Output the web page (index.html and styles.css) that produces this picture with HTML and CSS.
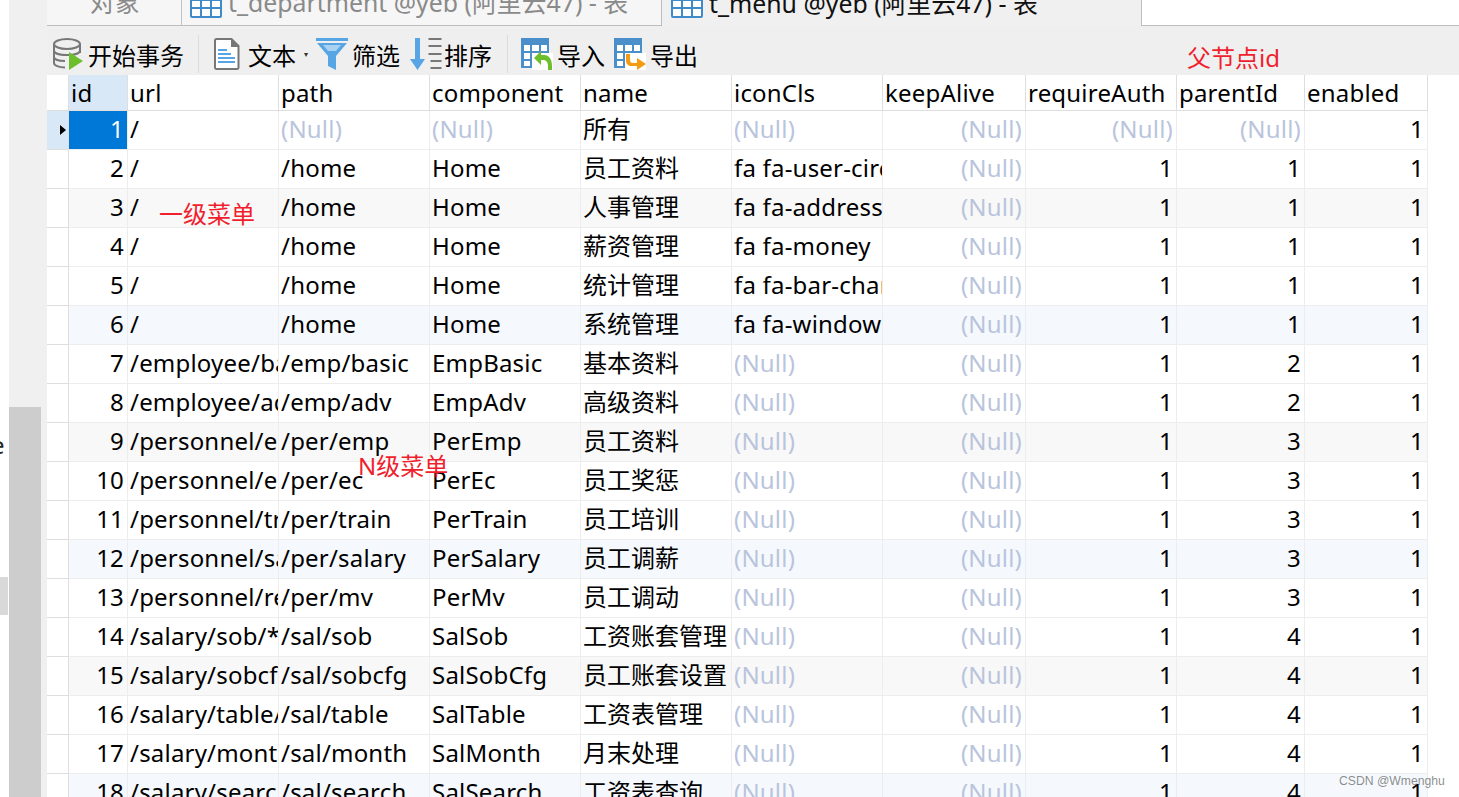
FILE: index.html
```html
<!DOCTYPE html>
<html lang="zh">
<head>
<meta charset="utf-8">
<title>t_menu</title>
<link rel="stylesheet" href="styles.css">
</head>
<body>
<div class="app">
  <aside class="edge"><span class="edge-letter">e</span><span class="edge-box"></span></aside>
  <div class="rail"><div class="thumb"></div></div>
  <main class="main">
    <nav class="tabs">
      <div class="tab tab-obj"><span>对象</span></div>
      <div class="tab tab-dept">
        <svg class="tab-icon" viewBox="0 0 32 24"><rect width="32" height="24" rx="2" fill="#3f8ac8"/><g fill="#fff"><rect x="2" y="7" width="8" height="6"/><rect x="12" y="7" width="8" height="6"/><rect x="22" y="7" width="8" height="6"/><rect x="2" y="15" width="8" height="7"/><rect x="12" y="15" width="8" height="7"/><rect x="22" y="15" width="8" height="7"/></g></svg>
        <span>t_department @yeb (阿里云47) - 表</span>
      </div>
      <div class="tab tab-menu">
        <svg class="tab-icon" viewBox="0 0 32 24"><rect width="32" height="24" rx="2" fill="#3f8ac8"/><g fill="#fff"><rect x="2" y="7" width="8" height="6"/><rect x="12" y="7" width="8" height="6"/><rect x="22" y="7" width="8" height="6"/><rect x="2" y="15" width="8" height="7"/><rect x="12" y="15" width="8" height="7"/><rect x="22" y="15" width="8" height="7"/></g></svg>
        <span>t_menu @yeb (阿里云47) - 表</span>
      </div>
      <div class="tab-rest"></div>
    </nav>
    <div class="toolbar">
      <div class="tool tool-begin">
        <svg class="ico-db" viewBox="0 0 30 32"><g fill="none" stroke="#777" stroke-width="2"><ellipse cx="14" cy="6" rx="13" ry="5"/><path d="M1 6v19c0 2.500 5 4.500 11 4.500M27 6v9M1 12.500c0 2.500 5 4.500 13 4.500s13-2 13-4.500M1 19c0 2.500 5 4 11 4"/></g><path d="M16 14l14 9-14 9z" fill="#6cbe2c"/></svg>
        <span>开始事务</span>
      </div>
      <i class="sep sep-a"></i>
      <div class="tool tool-text">
        <svg class="ico-doc" viewBox="0 0 26 32"><path d="M2.500 1h15l7 7v21.500a1.500 1.500 0 0 1-1.500 1.500h-20.500a1.500 1.500 0 0 1-1.500-1.500v-27a1.500 1.500 0 0 1 1.500-1.500z" fill="#fff" stroke="#777" stroke-width="2"/><path d="M17 1v8h8z" fill="#777"/><g fill="#57a5e4"><rect x="4" y="11" width="9" height="2"/><rect x="4" y="15" width="13" height="2"/><rect x="4" y="19" width="17" height="2"/><rect x="4" y="23" width="17" height="2"/></g></svg>
        <span>文本</span><b class="dot">▾</b>
      </div>
      <div class="tool tool-filter">
        <svg class="ico-funnel" viewBox="0 0 32 32"><path d="M0 0h32v3h-32z" fill="#57a5e4"/><path d="M1 5h30l-11 13v14l-8-4v-10z" fill="#57a5e4"/><path d="M7 7h18l-5 6h-8z" fill="#a9d2f2"/></svg>
        <span>筛选</span>
      </div>
      <div class="tool tool-sort">
        <svg class="ico-sort" viewBox="0 0 32 32"><path d="M5.500 0h5v21h5l-7.500 11-7.500-11h5z" fill="#57a5e4"/><g fill="#777"><rect x="19" y="0" width="13" height="2"/><rect x="19" y="7" width="13" height="2"/><rect x="19" y="15" width="13" height="2"/><rect x="21" y="22" width="11" height="2"/><rect x="21" y="29" width="11" height="2"/></g></svg>
        <span>排序</span>
      </div>
      <i class="sep sep-b"></i>
      <div class="tool tool-import">
        <svg class="ico-table" viewBox="0 0 32 32"><rect y="0" width="28" height="30" fill="#4a8fc9"/><g fill="#fff"><rect x="3" y="7" width="6" height="6"/><rect x="11" y="7" width="7" height="6"/><rect x="20" y="7" width="6" height="6"/><rect x="3" y="15" width="6" height="6"/><rect x="3" y="23" width="6" height="5"/><path d="M11 15h21v17h-21z"/></g><path d="M13 20l7-7v4h3c5 0 8 4 8 11v4h-4v-4c0-4-2-6-5-6h-2v5z" fill="#6cbe2c"/></svg>
        <span>导入</span>
      </div>
      <div class="tool tool-export">
        <svg class="ico-table" viewBox="0 0 32 32"><rect y="0" width="28" height="30" fill="#4a8fc9"/><g fill="#fff"><rect x="3" y="7" width="6" height="6"/><rect x="11" y="7" width="7" height="6"/><rect x="20" y="7" width="6" height="6"/><rect x="3" y="15" width="6" height="6"/><rect x="3" y="23" width="6" height="5"/><path d="M11 15h21v17h-21z"/></g><path d="M12 16h4v6c0 2 1 3 3 3h4v-5l9 6-9 6v-4h-5c-4 0-6-2-6-6z" fill="#f59a13"/></svg>
        <span>导出</span>
      </div>
    </div>
    <div class="grid-wrap">
      <table class="grid">
        <colgroup><col class="c0"><col class="c1"><col class="c2"><col class="c3"><col class="c4"><col class="c5"><col class="c6"><col class="c7"><col class="c8"><col class="c9"><col class="c10"></colgroup>
        <thead>
          <tr><th class="rh"></th><th class="sel-h">id</th><th>url</th><th>path</th><th>component</th><th>name</th><th>iconCls</th><th>keepAlive</th><th>requireAuth</th><th>parentId</th><th>enabled</th></tr>
        </thead>
        <tbody>
          <tr><td class="rh rh-cur"><i class="arrow"></i></td><td class="n sel">1</td><td>/</td><td class="nl">(Null)</td><td class="nl">(Null)</td><td>所有</td><td class="nl">(Null)</td><td class="n nl">(Null)</td><td class="n nl">(Null)</td><td class="n nl">(Null)</td><td class="n">1</td></tr>
          <tr><td class="rh"></td><td class="n">2</td><td>/</td><td>/home</td><td>Home</td><td>员工资料</td><td>fa fa-user-circle</td><td class="n nl">(Null)</td><td class="n">1</td><td class="n">1</td><td class="n">1</td></tr>
          <tr class="g"><td class="rh"></td><td class="n">3</td><td>/</td><td>/home</td><td>Home</td><td>人事管理</td><td>fa fa-address-card</td><td class="n nl">(Null)</td><td class="n">1</td><td class="n">1</td><td class="n">1</td></tr>
          <tr><td class="rh"></td><td class="n">4</td><td>/</td><td>/home</td><td>Home</td><td>薪资管理</td><td>fa fa-money</td><td class="n nl">(Null)</td><td class="n">1</td><td class="n">1</td><td class="n">1</td></tr>
          <tr><td class="rh"></td><td class="n">5</td><td>/</td><td>/home</td><td>Home</td><td>统计管理</td><td>fa fa-bar-chart</td><td class="n nl">(Null)</td><td class="n">1</td><td class="n">1</td><td class="n">1</td></tr>
          <tr class="b"><td class="rh"></td><td class="n">6</td><td>/</td><td>/home</td><td>Home</td><td>系统管理</td><td>fa fa-windows</td><td class="n nl">(Null)</td><td class="n">1</td><td class="n">1</td><td class="n">1</td></tr>
          <tr><td class="rh"></td><td class="n">7</td><td>/employee/basic/**</td><td>/emp/basic</td><td>EmpBasic</td><td>基本资料</td><td class="nl">(Null)</td><td class="n nl">(Null)</td><td class="n">1</td><td class="n">2</td><td class="n">1</td></tr>
          <tr><td class="rh"></td><td class="n">8</td><td>/employee/advanced/**</td><td>/emp/adv</td><td>EmpAdv</td><td>高级资料</td><td class="nl">(Null)</td><td class="n nl">(Null)</td><td class="n">1</td><td class="n">2</td><td class="n">1</td></tr>
          <tr class="g"><td class="rh"></td><td class="n">9</td><td>/personnel/emp/**</td><td>/per/emp</td><td>PerEmp</td><td>员工资料</td><td class="nl">(Null)</td><td class="n nl">(Null)</td><td class="n">1</td><td class="n">3</td><td class="n">1</td></tr>
          <tr><td class="rh"></td><td class="n">10</td><td>/personnel/ec/**</td><td>/per/ec</td><td>PerEc</td><td>员工奖惩</td><td class="nl">(Null)</td><td class="n nl">(Null)</td><td class="n">1</td><td class="n">3</td><td class="n">1</td></tr>
          <tr><td class="rh"></td><td class="n">11</td><td>/personnel/train/**</td><td>/per/train</td><td>PerTrain</td><td>员工培训</td><td class="nl">(Null)</td><td class="n nl">(Null)</td><td class="n">1</td><td class="n">3</td><td class="n">1</td></tr>
          <tr class="b"><td class="rh"></td><td class="n">12</td><td>/personnel/salary/**</td><td>/per/salary</td><td>PerSalary</td><td>员工调薪</td><td class="nl">(Null)</td><td class="n nl">(Null)</td><td class="n">1</td><td class="n">3</td><td class="n">1</td></tr>
          <tr><td class="rh"></td><td class="n">13</td><td>/personnel/remove/**</td><td>/per/mv</td><td>PerMv</td><td>员工调动</td><td class="nl">(Null)</td><td class="n nl">(Null)</td><td class="n">1</td><td class="n">3</td><td class="n">1</td></tr>
          <tr><td class="rh"></td><td class="n">14</td><td>/salary/sob/**</td><td>/sal/sob</td><td>SalSob</td><td>工资账套管理</td><td class="nl">(Null)</td><td class="n nl">(Null)</td><td class="n">1</td><td class="n">4</td><td class="n">1</td></tr>
          <tr class="g"><td class="rh"></td><td class="n">15</td><td>/salary/sobcfg/**</td><td>/sal/sobcfg</td><td>SalSobCfg</td><td>员工账套设置</td><td class="nl">(Null)</td><td class="n nl">(Null)</td><td class="n">1</td><td class="n">4</td><td class="n">1</td></tr>
          <tr><td class="rh"></td><td class="n">16</td><td>/salary/table/**</td><td>/sal/table</td><td>SalTable</td><td>工资表管理</td><td class="nl">(Null)</td><td class="n nl">(Null)</td><td class="n">1</td><td class="n">4</td><td class="n">1</td></tr>
          <tr><td class="rh"></td><td class="n">17</td><td>/salary/month/**</td><td>/sal/month</td><td>SalMonth</td><td>月末处理</td><td class="nl">(Null)</td><td class="n nl">(Null)</td><td class="n">1</td><td class="n">4</td><td class="n">1</td></tr>
          <tr class="b"><td class="rh"></td><td class="n">18</td><td>/salary/search/**</td><td>/sal/search</td><td>SalSearch</td><td>工资表查询</td><td class="nl">(Null)</td><td class="n nl">(Null)</td><td class="n">1</td><td class="n">4</td><td class="n">1</td></tr>
        </tbody>
      </table>
    </div>
  </main>
  <span class="note note-parent">父节点id</span>
  <span class="note note-first">一级菜单</span>
  <span class="note note-n">N级菜单</span>
  <span class="mark">CSDN @Wmenghu</span>
</div>
</body>
</html>
```
FILE: styles.css
```css
* { box-sizing: border-box; }
html, body { margin: 0; height: 100%; overflow: hidden; background: #fff; }
body { font-family: "Noto Sans", "Noto Sans CJK SC", sans-serif; font-size: 24px; color: #000; }
.app { position: relative; display: flex; width: 1459px; height: 797px; overflow: hidden; }

.edge { width: 9px; flex: none; display: flex; flex-direction: column; overflow: hidden; }
.edge-letter { height: 132px; margin-top: 427px; margin-left: -9px; line-height: 36px; color: #222; }
.edge-box { width: 8px; height: 38px; margin-top: 18px; background: #d9d9d9; }
.rail { width: 38px; flex: none; background: #f0f0f0; }
.thumb { width: 32px; height: 390px; margin-top: 407px; background: #cdcdcd; }

.main { flex: 1; min-width: 0; display: flex; flex-direction: column; background: #fff; }
.tabs { display: flex; height: 26px; flex: none; overflow: hidden; background: #f0f0f0; }
.tab { display: flex; align-items: flex-end; height: 26px; font-size: 24.85px; color: #8a8a8a; background: #f6f6f6; border-bottom: 1px solid #bdbdbd; overflow: hidden; white-space: nowrap; }
.tab span { line-height: 30px; margin-bottom: 8px; }
.tab-obj { width: 135px; padding-left: 43px; border-right: 1px solid #c4c4c4; }
.tab-dept { width: 480px; padding-left: 8px; border-right: 1px solid #bdbdbd; }
.tab-menu { width: 479px; padding-left: 9px; color: #111; background: #f0f0f0; border-bottom: 0; }
.tab-rest { flex: 1; background: #fff; border-left: 1px solid #bdbdbd; border-bottom: 1px solid #bdbdbd; }
.tab-icon { width: 32px; height: 24px; flex: none; margin: 0 6px 7px 0; }
.tab-menu .tab-icon { margin-bottom: 8px; }

.toolbar { display: flex; align-items: center; height: 49px; flex: none; padding: 7px 0 0 6px; background: #efefef; }
.tool { display: flex; align-items: center; white-space: nowrap; line-height: 34px; }
.tool span { position: relative; top: 2px; }
.sep { width: 1px; height: 38px; background: #dcdcdc; flex: none; }
.sep-a { margin: 0 15px 0 14px; }
.sep-b { margin: 0 13px 0 15px; }
.ico-db { width: 30px; height: 32px; margin-right: 5px; }
.ico-doc { width: 26px; height: 32px; margin-right: 8px; }
.ico-funnel { width: 32px; height: 32px; margin-right: 4px; }
.ico-sort { width: 33px; height: 32px; margin-right: 2px; }
.ico-table { width: 32px; height: 32px; margin-right: 4px; }
.dot { width: 20px; text-align: center; font-size: 8px; color: #333; font-weight: normal; }
.tool-filter { margin-right: 9px; }
.tool-import { margin-right: 9px; }

.grid-wrap { flex: 1; min-height: 0; overflow: hidden; }
.grid { border-collapse: separate; border-spacing: 0; table-layout: fixed; width: 1381px; letter-spacing: .2px; }
.c0 { width: 22px; } .c1 { width: 59px; } .c2 { width: 151px; } .c3 { width: 151px; } .c4 { width: 151px; } .c5 { width: 151px; } .c6 { width: 151px; } .c7 { width: 143px; } .c8 { width: 151px; } .c9 { width: 128px; } .c10 { width: 123px; }
th, td { padding: 0 2px 0 2px; font-weight: 400; text-align: left; white-space: nowrap; overflow: hidden; border-right: 1px solid #ededed; border-bottom: 1px solid #ededed; }
td { height: 39px; line-height: 36px; padding-bottom: 2px; }
th { height: 36px; line-height: 35px; border-color: #dedede; background: #fff; }
td:nth-child(6) { letter-spacing: 0; }
td.rh { border-color: #dedede; padding: 0; background: #fff; }
th.rh { padding: 0; }
td.n { text-align: right; padding-right: 3px; }
.nl { color: #b9c4dc; }
.g td { background: #f8f8f8; }
.b td { background: #f5f9fd; }
.g td.rh, .b td.rh { background: #fff; }
th.sel-h { background: #d9e8f7; }
td.rh-cur { background: #d9e8f7; }
td.sel { background: #0078d7; color: #fff; }
.arrow { display: block; width: 0; height: 0; margin-left: 13px; border-left: 6px solid #000; border-top: 5.5px solid transparent; border-bottom: 5.500px solid transparent; }

.note { position: absolute; color: #f01f2e; line-height: 32px; white-space: nowrap; }
.note-parent { left: 1187px; top: 42px; }
.note-first { left: 159px; top: 198px; }
.note-n { left: 358px; top: 450px; }
.mark { position: absolute; left: 1339px; top: 771px; font-size: 12.2px; line-height: 20px; color: rgba(90,90,90,.7); font-family: "Liberation Sans", sans-serif; white-space: nowrap; }
```
